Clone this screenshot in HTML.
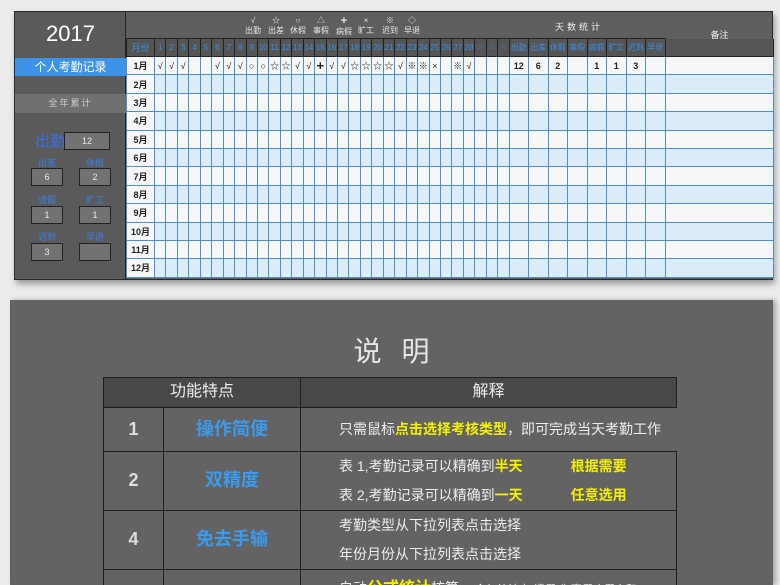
<!DOCTYPE html>
<html><head><meta charset="utf-8"><style>
*{margin:0;padding:0;box-sizing:border-box}
html{width:780px;height:585px;overflow:hidden}
body{width:780px;height:585px;overflow:hidden;background:#ececec;font-family:"Liberation Sans","Noto Sans CJK SC",sans-serif;position:relative}
#top{position:absolute;left:14px;top:11px;width:759px;height:269px;background:#5e5e5e;border:1px solid #2a2a2a;box-shadow:2px 4px 6px rgba(0,0,0,.35)}
.abs{position:absolute}
.side{left:0;top:0;width:111px;height:267px;background:#5a5a5a;border-right:1px solid #222}
.yr{left:0;top:9px;width:111px;text-align:center;color:#fff;font-size:22px}
.pbar{left:0;top:46px;width:111px;height:18px;background:#3d93e6;color:#fff;text-align:center;font-size:12px;line-height:18px}
.tbar{left:0;top:82px;width:111px;height:19px;background:#707070;color:#cfcfcf;text-align:center;font-size:9px;line-height:19px;letter-spacing:2px}
.box{background:#727272;border:1px solid #222;color:#e8e8e8;font-size:9px;text-align:center;line-height:16px;height:18px;width:32px}
.lb{color:#3a7fe8;font-size:9px;width:32px;text-align:center}
.lg{color:#e6e6e6;font-size:8px;text-align:center;width:22px;line-height:10px}
table{position:absolute;left:111px;top:26px;border-collapse:collapse;table-layout:fixed;width:648px}
td{border:1px solid #4b8fd0;height:18.4px;font-size:9px;text-align:center;padding:0;overflow:hidden;white-space:nowrap;color:#222}
tr.h td{background:#555;color:#3a8fe8;border-color:#222;height:18px;font-size:8px}
tr.w td{background:#f6f6f6}
tr.b td{background:#dcebf8}
td.m{background:#f6f6f6 !important;font-weight:bold;font-size:9px}
td.s{font-weight:bold}
#bot{position:absolute;left:10px;top:300px;width:763px;height:285px;background:#636363;box-shadow:3px 0 5px rgba(0,0,0,.3);overflow:hidden}
.t2{position:absolute;left:0;top:30px;width:763px;text-align:center;color:#e6e6e6;font-size:28px;letter-spacing:20px;padding-left:20px}
.c{position:absolute;border:1.5px solid #1e1e1e;color:#eee;font-size:14px}
.y{color:#f5f000;font-weight:bold}
.bl{color:#3a9cf0;font-weight:bold;font-size:18px}
.n{font-size:18px;color:#ddd;font-weight:bold}
</style></head><body>
<div id="top">
 <div class="abs side">
  <div class="abs yr">2017</div>
  <div class="abs pbar">个人考勤记录</div>
  <div class="abs tbar">全年累计</div>
  <div class="abs" style="left:20px;top:118px;color:#3a6fe8;font-size:15px">出勤</div>
  <div class="abs box" style="left:49px;top:120px;width:46px">12</div>
  <div class="abs lb" style="left:16px;top:144px">出差</div><div class="abs lb" style="left:64px;top:144px">休假</div>
  <div class="abs box" style="left:16px;top:156px">6</div><div class="abs box" style="left:64px;top:156px">2</div>
  <div class="abs lb" style="left:16px;top:181px">请假</div><div class="abs lb" style="left:64px;top:181px">旷工</div>
  <div class="abs box" style="left:16px;top:194px">1</div><div class="abs box" style="left:64px;top:194px">1</div>
  <div class="abs lb" style="left:16px;top:218px">迟到</div><div class="abs lb" style="left:64px;top:218px">早退</div>
  <div class="abs box" style="left:16px;top:231px">3</div><div class="abs box" style="left:64px;top:231px"></div>
 </div>
 <div class="abs lg" style="left:227px;top:4px">√<br>出勤</div>
 <div class="abs lg" style="left:250px;top:4px">☆<br>出差</div>
 <div class="abs lg" style="left:272px;top:4px">○<br>休假</div>
 <div class="abs lg" style="left:295px;top:4px">△<br>事假</div>
 <div class="abs lg" style="left:318px;top:4px"><b style="font-size:11px">+</b><br>病假</div>
 <div class="abs lg" style="left:340px;top:4px">×<br>旷工</div>
 <div class="abs lg" style="left:364px;top:4px">※<br>迟到</div>
 <div class="abs lg" style="left:386px;top:4px">◇<br>早退</div>
 <div class="abs" style="left:540px;top:8px;color:#eee;font-size:9px;letter-spacing:3px">天数统计</div>
 <div class="abs" style="left:650px;top:16px;width:109px;text-align:center;color:#eee;font-size:9px">备注</div>
 <table id="g"></table>
</div>
<div id="bot">
 <div class="t2">说明</div>
 <div class="c" style="left:93px;top:77px;width:198px;height:31px;background:#484848;text-align:center;line-height:28px;font-size:16px">功能特点</div>
 <div class="c" style="left:290px;top:77px;width:377px;height:31px;background:#484848;text-align:center;line-height:28px;font-size:16px">解释</div>
 <div class="c n" style="left:93px;top:107px;width:61px;height:45px;text-align:center;line-height:42px">1</div>
 <div class="c bl" style="left:153px;top:107px;width:138px;height:45px;text-align:center;line-height:42px">操作简便</div>
 <div class="c" style="left:290px;top:107px;width:377px;height:45px;line-height:42px;padding-left:38px;white-space:nowrap;border-right:none">只需鼠标<span class="y">点击选择考核类型</span>，即可完成当天考勤工作</div>
 <div class="c n" style="left:93px;top:151px;width:61px;height:60px;text-align:center;line-height:57px">2</div>
 <div class="c bl" style="left:153px;top:151px;width:138px;height:60px;text-align:center;line-height:57px">双精度</div>
 <div class="c" style="left:290px;top:151px;width:377px;height:60px;padding-left:38px;line-height:29px;white-space:nowrap">表 1,考勤记录可以精确到<span class="y" style="display:inline-block;width:76px">半天</span><span class="y">根据需要</span><br>表 2,考勤记录可以精确到<span class="y" style="display:inline-block;width:76px">一天</span><span class="y">任意选用</span></div>
 <div class="c n" style="left:93px;top:210px;width:61px;height:60px;text-align:center;line-height:57px">4</div>
 <div class="c bl" style="left:153px;top:210px;width:138px;height:60px;text-align:center;line-height:57px">免去手输</div>
 <div class="c" style="left:290px;top:210px;width:377px;height:60px;padding-left:38px;line-height:29px">考勤类型从下拉列表点击选择<br>年份月份从下拉列表点击选择</div>
 <div class="c" style="left:93px;top:269px;width:61px;height:30px"></div>
 <div class="c" style="left:153px;top:269px;width:138px;height:30px"></div>
 <div class="c" style="left:290px;top:269px;width:377px;height:30px;padding-left:38px;padding-top:4px;white-space:nowrap">自动<span class="y" style="font-size:16px">公式统计</span>核算 <span style="font-size:11px;margin-left:12px">全年统计中"请假"为事假病假之和</span></div>
</div>
<script>
var g=document.getElementById('g');
var h='<colgroup><col style="width:28px">';
for(var i=0;i<31;i++)h+='<col style="width:11.45px">';
for(i=0;i<8;i++)h+='<col style="width:19.5px">';
h+='<col></colgroup><tr class="h"><td style="font-size:9px">月份</td>';
for(i=1;i<=31;i++)h+='<td style="'+(i>28?'color:#4a6f95;font-size:6px':'')+'">'+i+'</td>';
['出勤','出差','休假','事假','病假','旷工','迟到','早退'].forEach(function(s){h+='<td>'+s+'</td>'});
h+='<td style="border-top:none"></td></tr>';
var j=['√','√','√','','','√','√','√','○','○','☆','☆','√','√','<b style="font-size:13px">+</b>','√','√','☆','☆','☆','☆','√','※','※','×','','※','√','','',''];
var st=['12','6','2','','1','1','3',''];
for(var r=1;r<=12;r++){
 h+='<tr class="'+(r%2?'w':'b')+'"><td class="m">'+r+'月</td>';
 for(i=0;i<31;i++)h+='<td>'+(r==1?j[i]:'')+'</td>';
 for(i=0;i<8;i++)h+='<td class="s">'+(r==1?st[i]:'')+'</td>';
 h+='<td></td></tr>';
}
g.innerHTML=h;
</script>
</body></html>
